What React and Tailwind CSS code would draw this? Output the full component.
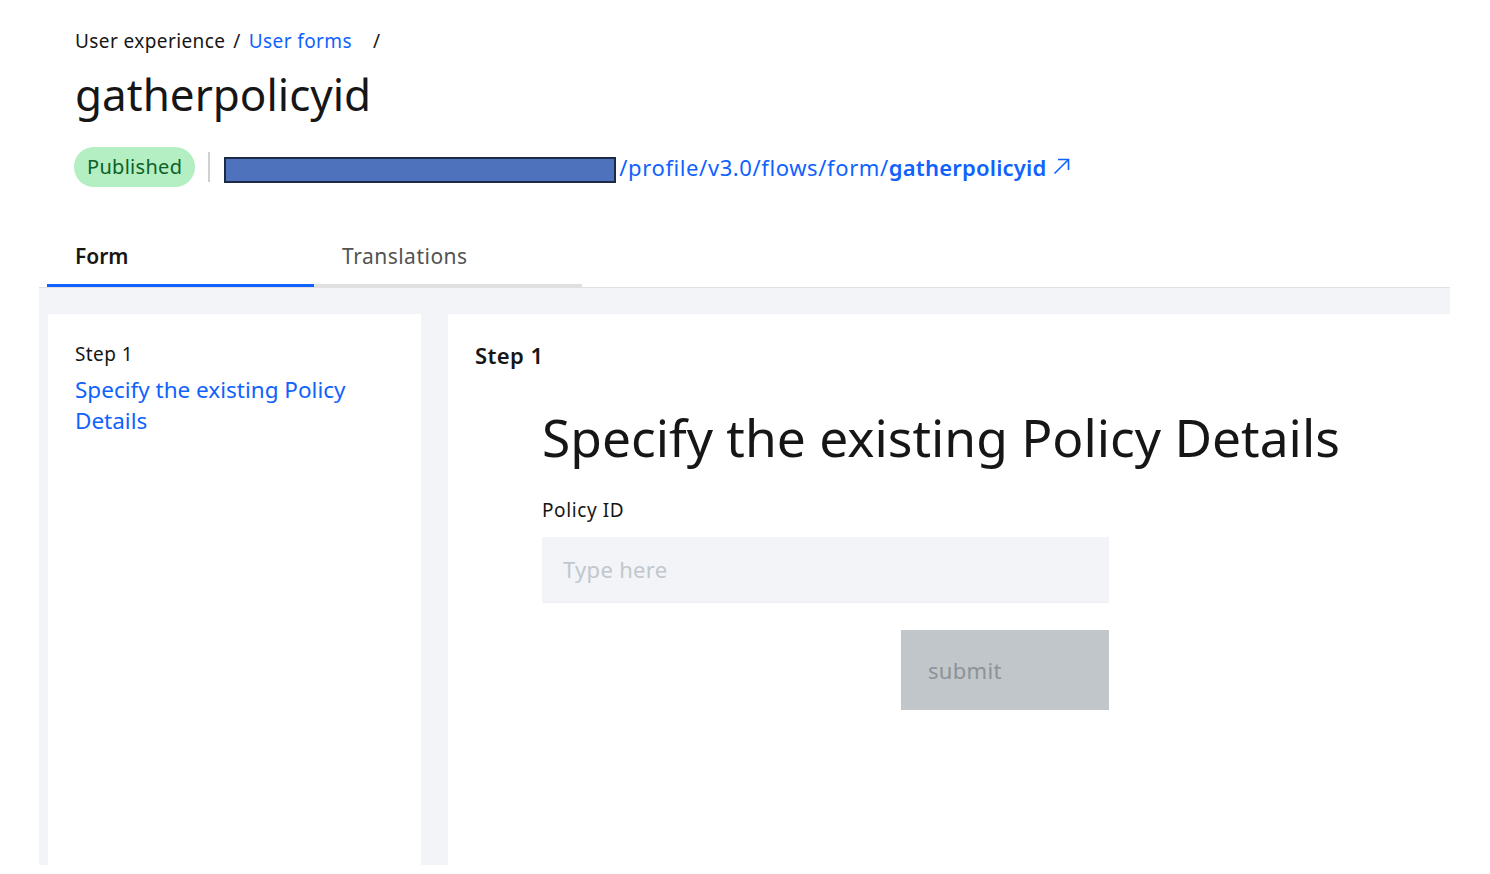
import React from "react";

function ArrowUpRight() {
  return (
    <svg width="20" height="20" viewBox="0 0 20 20" fill="none" className="ml-[4px] mb-[2px]">
      <path d="M3.5 17.5 L17 4" stroke="#0f62fe" strokeWidth="1.6" />
      <path d="M7 3.5 H17.5 V14" stroke="#0f62fe" strokeWidth="1.6" />
    </svg>
  );
}

export default function App() {
  return (
    <div className="min-h-[874px] bg-white text-[#161616]" style={{ fontFamily: '"Noto Sans", sans-serif' }}>
      <div className="px-[75px] pt-[26px]">
        <div className="flex items-center text-[19px] leading-[30px] tracking-[0.4px]">
          <span>User experience</span>
          <span className="mx-[8px]">/</span>
          <span className="text-[#0f62fe]">User forms</span>
          <span className="ml-[21px]">/</span>
        </div>
        <h1 className="mt-[10px] text-[44px] leading-[56px] font-normal">gatherpolicyid</h1>
        <div className="mt-[25px] flex items-center ml-[-1px]">
          <span className="h-[40px] px-[13px] rounded-full bg-[#b3efc2] text-[#0e6027] text-[20px] tracking-[0.3px] flex items-center">Published</span>
          <span className="ml-[13px] w-[2px] h-[30px] bg-[#d0d0d0]"></span>
          <span className="ml-[14px] mt-[5px] w-[392px] h-[26px] bg-[#4f72bd] border-2 border-[#1c2a45]"></span>
          <a className="ml-[3px] flex items-center text-[22px] text-[#0f62fe]">
            <span className="tracking-[0.6px]">/profile/v3.0/flows/form/</span>
            <span className="font-semibold tracking-[0.2px]">gatherpolicyid</span>
            <ArrowUpRight />
          </a>
        </div>
      </div>
      <div className="mt-[38px] flex pl-[47px]">
        <div className="w-[267px] h-[62px] flex items-center pl-[28px] pt-[4px] text-[21px] font-semibold border-b-[3px] border-[#0f62fe]">Form</div>
        <div className="w-[268px] h-[62px] flex items-center pl-[28px] pt-[4px] text-[21px] tracking-[0.5px] text-[#525252] border-b-[3px] border-[#e0e0e0]">Translations</div>
      </div>
      <div className="mx-[39px] w-[1411px] border-t border-[#e0e0e0] bg-[#f2f4f8] pt-[26px] pl-[9px] flex gap-[27px] h-[578px]">
        <div className="w-[373px] bg-white px-[27px] pt-[26px]">
          <div className="text-[19px] leading-[28px] tracking-[0.4px]">Step 1</div>
          <div className="mt-[6px] text-[22.5px] leading-[31px] text-[#0f62fe] w-[300px]">Specify the existing Policy Details</div>
        </div>
        <div className="flex-1 bg-white pl-[27px] pt-[26px]">
          <div className="text-[22px] leading-[30px] font-semibold tracking-[0.4px]">Step 1</div>
          <div className="pl-[67px]">
            <h2 className="mt-[36px] text-[51.5px] leading-[62px] font-normal">Specify the existing Policy Details</h2>
            <div className="mt-[29px] text-[19px] leading-[26px] tracking-[0.6px]">Policy ID</div>
            <div className="mt-[14px] w-[567px] h-[66px] bg-[#f2f4f8] flex items-center pl-[21px] text-[22px] tracking-[0.3px] text-[#c1c7cd] border-b border-[#eef0f4]">Type here</div>
            <div className="mt-[27px] w-[567px] flex justify-end">
              <div className="w-[208px] h-[80px] bg-[#c1c6ca] flex items-center pl-[27px] text-[22px] tracking-[0.3px] text-[#8d9298]">submit</div>
            </div>
          </div>
        </div>
      </div>
    </div>
  );
}
